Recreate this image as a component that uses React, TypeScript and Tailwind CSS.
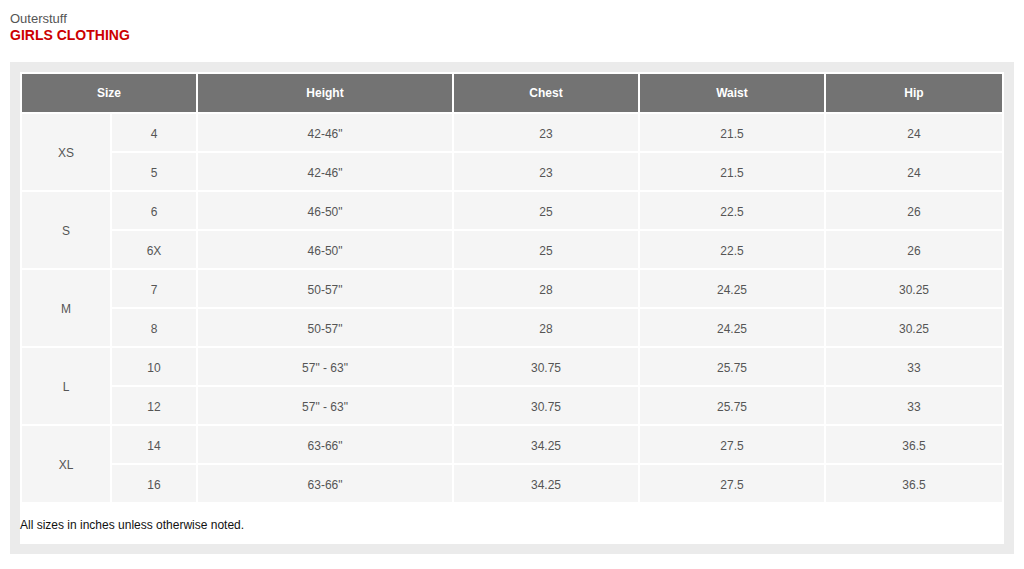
import React from "react";

interface SizeGroup {
  label: string;
  rows: string[][];
}

const groups: SizeGroup[] = [
  { label: "XS", rows: [["4", '42-46"', "23", "21.5", "24"], ["5", '42-46"', "23", "21.5", "24"]] },
  { label: "S", rows: [["6", '46-50"', "25", "22.5", "26"], ["6X", '46-50"', "25", "22.5", "26"]] },
  { label: "M", rows: [["7", '50-57"', "28", "24.25", "30.25"], ["8", '50-57"', "28", "24.25", "30.25"]] },
  { label: "L", rows: [["10", '57" - 63"', "30.75", "25.75", "33"], ["12", '57" - 63"', "30.75", "25.75", "33"]] },
  { label: "XL", rows: [["14", '63-66"', "34.25", "27.5", "36.5"], ["16", '63-66"', "34.25", "27.5", "36.5"]] },
];

const headers = ["Height", "Chest", "Waist", "Hip"];

const App: React.FC = () => {
  return (
    <div className="min-h-screen bg-white font-['Liberation_Sans',Arial,sans-serif]">
      <div className="px-[10px] pt-[11px]">
        <div className="text-[13px] leading-[16px] text-[#555555]">Outerstuff</div>
        <div className="text-[14px] leading-[17px] font-bold text-[#cc0000]">GIRLS CLOTHING</div>
      </div>
      <div className="mx-[10px] mt-[18px] bg-[#ebebeb] p-[10px]">
        <div className="bg-white pb-[11px]">
          <table className="w-[984px] table-fixed border-separate border-spacing-[2px] text-[12px] text-[#555555]">
            <colgroup>
              <col className="w-[88px]" />
              <col className="w-[84px]" />
              <col className="w-[254px]" />
              <col className="w-[184px]" />
              <col className="w-[184px]" />
              <col className="w-[176px]" />
            </colgroup>
            <thead>
              <tr className="h-[38px]">
                <th colSpan={2} className="bg-[#737373] pb-[1px] text-center font-bold text-white">Size</th>
                {headers.map((h) => (
                  <th key={h} className="bg-[#737373] pb-[1px] text-center font-bold text-white">{h}</th>
                ))}
              </tr>
            </thead>
            <tbody>
              {groups.map((g) =>
                g.rows.map((row, i) => (
                  <tr key={g.label + i} className="h-[37px]">
                    {i === 0 && (
                      <td rowSpan={2} className="bg-[#f5f5f5] pt-[2px] text-center">{g.label}</td>
                    )}
                    {row.map((cell, j) => (
                      <td key={j} className="bg-[#f5f5f5] pt-[2px] text-center">{cell}</td>
                    ))}
                  </tr>
                ))
              )}
            </tbody>
          </table>
          <p className="mt-[14px] text-[12px] leading-[15px] text-[#111111]">All sizes in inches unless otherwise noted.</p>
        </div>
      </div>
    </div>
  );
};

export default App;
